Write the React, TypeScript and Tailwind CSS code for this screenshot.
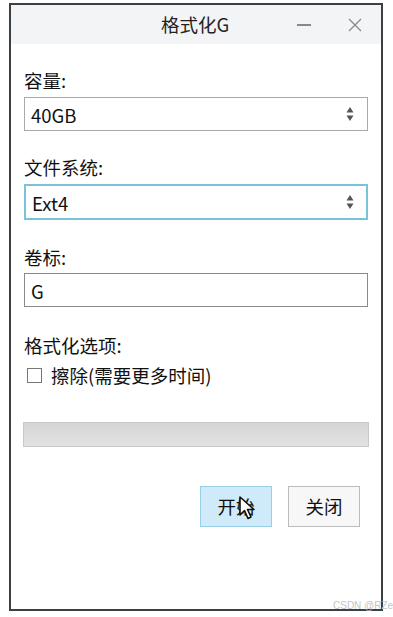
import React from "react";

const font = { fontFamily: '"Noto Sans CJK SC", "Noto Sans", sans-serif' };

function SpinArrows() {
  return (
    <svg width="8" height="16" viewBox="0 0 8 16" className="shrink-0">
      <path d="M4 1 L7.5 6.5 L0.5 6.5 Z" fill="#555" />
      <path d="M0.5 9.5 L7.5 9.5 L4 15 Z" fill="#555" />
    </svg>
  );
}

function Cursor() {
  return (
    <svg width="18" height="26" viewBox="0 0 18 26" className="absolute left-[38px] top-[9px]">
      <path
        d="M1 1 L1 19 L5.5 14.5 L9 22.5 L12 21 L8.5 13.5 L15 13.5 Z"
        fill="#fff"
        stroke="#111"
        strokeWidth="1.6"
        strokeLinejoin="round"
      />
    </svg>
  );
}

export default function App() {
  return (
    <div className="w-[393px] h-[617px] bg-white relative overflow-hidden" style={font}>
      <div className="ml-[9px] mt-[3px] w-[374px] h-[608px] border-2 border-[#3b4045] bg-white flex flex-col">
        <div className="h-[39px] bg-[#f3f4f5] flex items-center relative shrink-0">
          <span className="absolute left-[150px] top-[8px] text-[18.5px] leading-[22px] text-[#222]">格式化G</span>
          <span className="absolute left-[286px] top-[19px] w-[14px] h-[1.5px] bg-[#888]" />
          <svg width="14" height="14" viewBox="0 0 14 14" className="absolute left-[337px] top-[13px]">
            <path d="M1 1 L13 13 M13 1 L1 13" stroke="#888" strokeWidth="1.3" />
          </svg>
        </div>

        <div className="flex flex-col px-[13px] text-[#111] text-[18.5px]">
          <div className="mt-[25px] leading-[22px]">容量:</div>
          <div className="mt-[6px] h-[34px] border border-[#a9a9a9] flex items-center justify-between pl-[6px] pr-[13px]">
            <span className="mt-[4px]">40GB</span>
            <SpinArrows />
          </div>

          <div className="mt-[25px] leading-[22px]">文件系统:</div>
          <div className="mt-[6px] h-[36px] border-2 border-[#7cc3d9] flex items-center justify-between pl-[6px] pr-[12px]">
            <span className="mt-[4px]">Ext4</span>
            <SpinArrows />
          </div>

          <div className="mt-[26px] leading-[22px]">卷标:</div>
          <div className="mt-[5px] h-[34px] border border-[#8a8a8a] flex items-center pl-[6px]">
            <span className="mt-[3px]">G</span>
          </div>

          <div className="mt-[27px] leading-[22px]">格式化选项:</div>
          <div className="mt-[8px] flex items-center">
            <span className="ml-[3px] w-[15px] h-[15px] border border-[#777] bg-white" />
            <span className="ml-[9px] leading-[22px]">擦除(需要更多时间)</span>
          </div>

          <div className="mt-[36px] -ml-[1px] w-[346px] h-[25px] border border-[#c9c9c9] bg-gradient-to-b from-[#d6d6d6] to-[#e2e2e2]" />

          <div className="mt-[39px] flex justify-end gap-[16px] pr-[8px]">
            <div className="relative w-[72px] h-[41px] bg-[#cfeaf8] border border-[#98cfe6] flex items-center justify-center">
              开始
              <Cursor />
            </div>
            <div className="w-[72px] h-[41px] bg-[#f7f7f7] border border-[#bcbcbc] flex items-center justify-center">
              关闭
            </div>
          </div>
        </div>
      </div>
      <span className="absolute left-[333px] top-[598px] whitespace-nowrap text-[10px] text-[#c4c4c4]" style={{ fontFamily: '"Liberation Sans", sans-serif' }}>
        CSDN @RZer
      </span>
    </div>
  );
}
